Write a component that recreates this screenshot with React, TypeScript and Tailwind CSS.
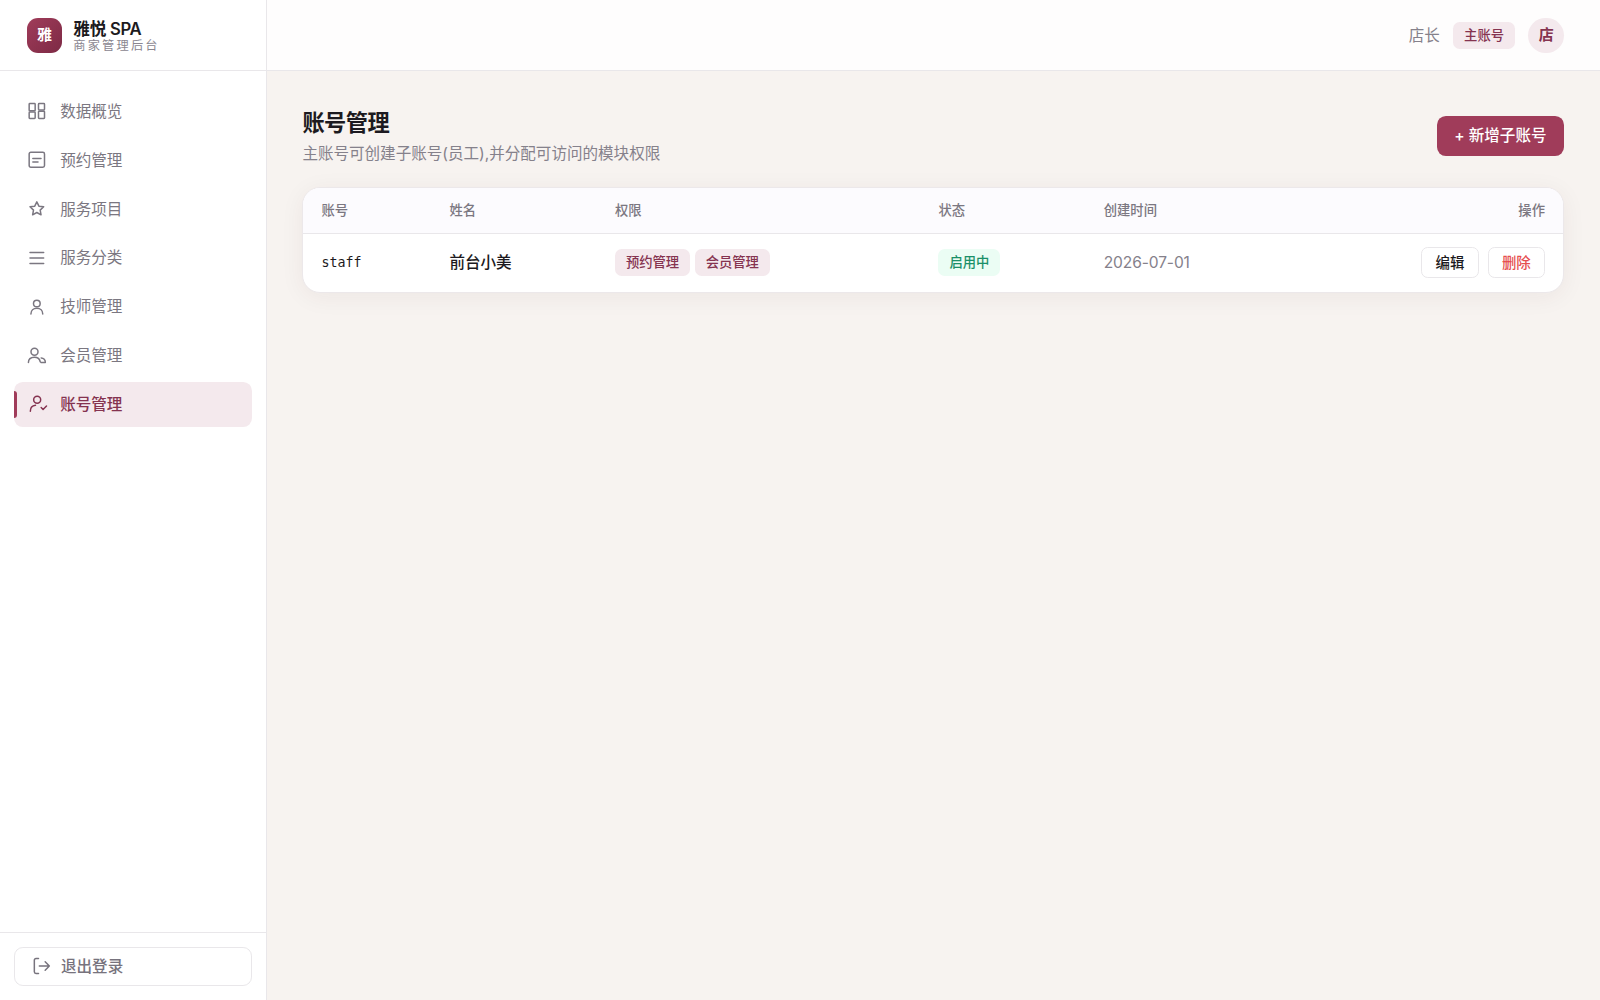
import type { ReactNode } from 'react';

const icons: Record<string, ReactNode> = {
  overview: (
    <>
      <rect x="2.600" y="3" width="7.200" height="8.800" rx="0.8" />
      <rect x="13.800" y="3" width="7.200" height="7.800" rx="0.8" />
      <rect x="2.600" y="13.200" width="7.200" height="7.800" rx="0.8" />
      <rect x="13.800" y="12.200" width="7.200" height="8.800" rx="0.8" />
    </>
  ),
  booking: (
    <>
      <rect x="2.600" y="2.700" width="18.400" height="18" rx="2" />
      <path d="M7 10.200h9.800M7 14.400h6.200" />
    </>
  ),
  service: (
    <path d="M11.800 3.400l2.500 5.200 5.700.7-4.200 4 1.050 5.700-5.050-2.800L6.750 19l1.050-5.700-4.200-4 5.700-.7z" />
  ),
  category: <path d="M3.600 5.400h16.400M3.600 12h16.400M3.600 18.600h16.400" />,
  therapist: (
    <>
      <circle cx="11.800" cy="7.800" r="4" />
      <path d="M4.700 20.400c0-4.300 3-7 7.100-7s7.100 2.700 7.100 7" />
    </>
  ),
  member: (
    <>
      <circle cx="9" cy="7" r="4.200" />
      <path d="M1.700 19.900c0-4 3-6.400 7.200-6.400 3.800 0 6.400 2.200 6.900 5.300M17 14.300c3 .2 5.200 2.400 5 5.400h-5.200" />
    </>
  ),
  account: (
    <>
      <circle cx="12.200" cy="7" r="4.200" />
      <path d="M4 20.700c0-4 2.400-6.700 6.200-7.100M17 16.300l2.300 2.300 4.100-4.100" />
    </>
  ),
  logout: <path d="M9 3H6a2 2 0 0 0-2 2v14a2 2 0 0 0 2 2h3M10 12h12M17 7l5 5-5 5" />,
};

function Icon({ name }: { name: string }) {
  return (
    <svg
      className="size-5 shrink-0 overflow-visible"
      viewBox="0 0 24 24"
      fill="none"
      stroke="currentColor"
      strokeWidth="1.8"
      strokeLinecap="round"
      strokeLinejoin="round"
    >
      {icons[name]}
    </svg>
  );
}

const nav = [
  { icon: 'overview', label: '数据概览' },
  { icon: 'booking', label: '预约管理' },
  { icon: 'service', label: '服务项目' },
  { icon: 'category', label: '服务分类' },
  { icon: 'therapist', label: '技师管理' },
  { icon: 'member', label: '会员管理' },
  { icon: 'account', label: '账号管理', active: true },
];

function Tag({ children }: { children: ReactNode }) {
  return (
    <span className="flex h-[26.700px] items-center rounded-[6.700px] bg-[#f4e9ed] px-[11px] text-[13.330px] font-medium text-[#853350]">
      {children}
    </span>
  );
}

function Sidebar() {
  return (
    <aside className="flex w-[267px] shrink-0 flex-col border-r border-[#e9e7ea] bg-white">
      <div className="flex h-[71px] shrink-0 items-center gap-[11px] border-b border-[#e9e7ea] pt-px pl-[26.700px]">
        <div className="flex size-[35.600px] items-center justify-center rounded-[11px] bg-linear-to-br from-[#a03c5a] to-[#7d2a45] text-[15px] font-semibold text-white">
          雅
        </div>
        <div>
          <div className="text-[16.670px] leading-[20px] font-semibold tracking-[-0.300px] text-[#1c1a20]">雅悦 SPA</div>
          <div className="text-[12.220px] leading-[14px] tracking-[2.200px] text-[#8a8690]">商家管理后台</div>
        </div>
      </div>
      <nav className="flex flex-1 flex-col gap-[4.440px] pr-[14px] pl-[13.500px] pt-[18px]">
        {nav.map((item) => (
          <a
            key={item.label}
            className={
              item.active
                ? 'relative flex h-[44.440px] items-center gap-[13.330px] rounded-[8.900px] bg-[#f4e9ed] pl-[13.330px] text-[15.560px] font-medium text-[#853350]'
                : 'flex h-[44.440px] items-center gap-[13.330px] rounded-[8.900px] pt-[0.500px] pl-[13.330px] text-[15.560px] text-[#7b7781]'
            }
          >
            {item.active && (
              <span className="absolute top-[9px] bottom-[9px] left-0 w-[3.300px] rounded-r-[3px] bg-[#a03c5a]" />
            )}
            <Icon name={item.icon} />
            {item.label}
          </a>
        ))}
      </nav>
      <div className="border-t border-[#e9e7ea] pt-[13.330px] pr-[14px] pb-[14px] pl-[14px]">
        <button className="flex h-[39.500px] w-full items-center gap-[10px] rounded-[8.900px] border border-[#e9e7ea] pl-[16px] text-[15.560px] font-medium text-[#77737d]">
          <Icon name="logout" />
          退出登录
        </button>
      </div>
    </aside>
  );
}

const columns =
  'grid grid-cols-[128px_165.500px_323.500px_165.300px_1fr_auto] items-center px-[18px]';

export default function App() {
  return (
    <div className="flex h-screen w-full overflow-hidden bg-[#f7f3f0] font-[Inter,'Noto_Sans_CJK_SC',sans-serif] text-[#1c1a20]">
      <Sidebar />
      <div className="flex flex-1 flex-col">
        <header className="flex h-[71px] shrink-0 items-center justify-end gap-[13.330px] border-b border-[#e9e7ea] bg-[#fefdfd] pt-px pr-[36px]">
          <span className="text-[15.560px] text-[#85818b]">店长</span>
          <Tag>主账号</Tag>
          <span className="flex size-[35.600px] items-center justify-center rounded-full bg-[#f4e9ed] text-[15px] font-semibold text-[#853350]">
            店
          </span>
        </header>
        <main className="pt-[34.500px] pr-[36px] pl-[35.400px]">
          <div className="flex items-center justify-between">
            <div>
              <h1 className="text-[22.220px] leading-[33px] font-semibold tracking-[-0.500px]">账号管理</h1>
              <p className="mt-[3px] text-[15.560px] leading-[23px] text-[#85818b]">
                主账号可创建子账号(员工),并分配可访问的模块权限
              </p>
            </div>
            <button className="mt-px h-[40px] rounded-[8.900px] bg-[#a03c5a] px-[17.500px] text-[15.560px] font-medium text-white">
              + 新增子账号
            </button>
          </div>
          <section className="mt-[22px] overflow-hidden rounded-[18px] border border-[#ece8ea] bg-white shadow-[0_4px_24px_rgba(60,30,40,0.06)]">
            <div
              className={`${columns} h-[46px] border-b border-[#e9e7ea] bg-[#fcfbfe] pt-[2px] text-[13.330px] font-medium text-[#7b7781]`}
            >
              <span>账号</span>
              <span>姓名</span>
              <span>权限</span>
              <span>状态</span>
              <span>创建时间</span>
              <span>操作</span>
            </div>
            <div className={`${columns} h-[58px] text-[15.560px]`}>
              <span className="font-['DejaVu_Sans_Mono',monospace] text-[13.330px]">staff</span>
              <span className="font-medium">前台小美</span>
              <span className="flex gap-[4.440px]">
                <Tag>预约管理</Tag>
                <Tag>会员管理</Tag>
              </span>
              <span className="flex">
                <span className="flex h-[26.700px] items-center rounded-[6.700px] bg-[#ebfdf4] px-[11px] text-[13.330px] font-medium text-[#1b9069]">
                  启用中
                </span>
              </span>
              <span className="tracking-[-0.100px] text-[#85818b]">2026-07-01</span>
              <span className="flex gap-[8.900px]">
                <button className="h-[31px] rounded-[6.700px] border border-[#e9e7ea] px-[13.500px] text-[14.440px] font-medium">
                  编辑
                </button>
                <button className="h-[31px] rounded-[6.700px] border border-[#e9e7ea] px-[13.200px] text-[14.440px] font-medium text-[#e64f4f]">
                  删除
                </button>
              </span>
            </div>
          </section>
        </main>
      </div>
    </div>
  );
}
